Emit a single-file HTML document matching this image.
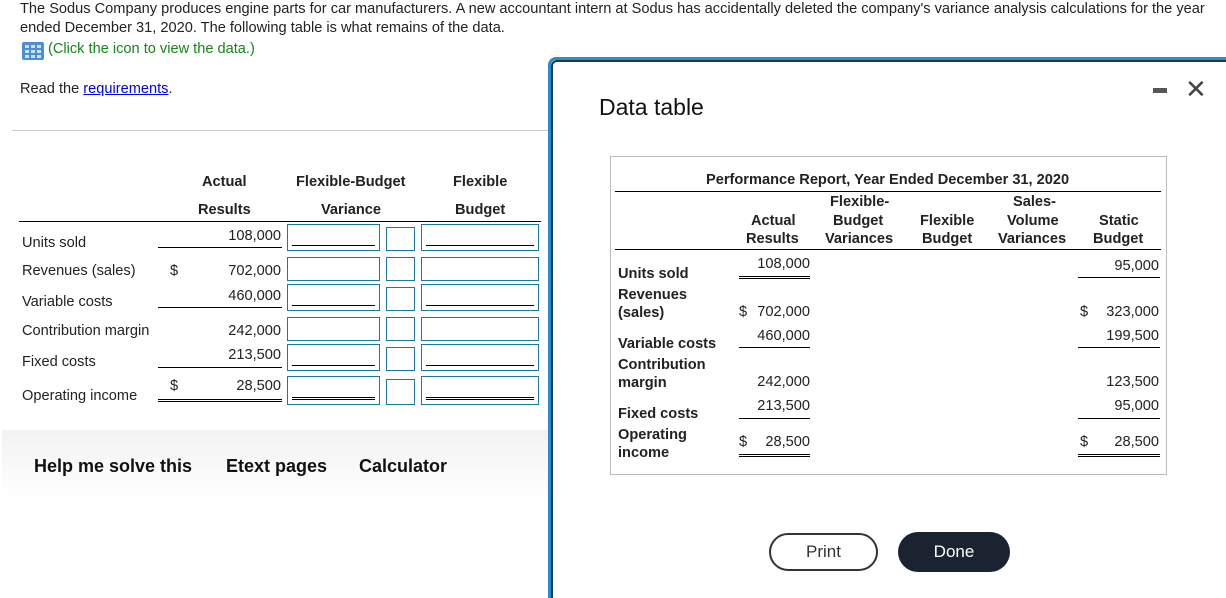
<!DOCTYPE html><html style="overflow:hidden"><head><style>
html,body{overflow:hidden;height:598px}
body{margin:0;width:1226px;background:#fff;font-family:"Liberation Sans",Arial,sans-serif;color:#222;position:relative}
.a{position:absolute;white-space:nowrap}
.t{font-size:14.6px}
.b{font-weight:bold}
.r{text-align:right}
.in{position:absolute;border:1px solid #1a7a9b;background:#fff;box-sizing:border-box}
.ul{position:absolute;border-top:1px solid #000}
.dl{position:absolute;border-top:3px double #000;height:0}
</style></head><body>
<div class="a t" style="left:20px;top:0px;line-height:19px;color:#222">The Sodus Company produces engine parts for car manufacturers. A new accountant intern at Sodus has accidentally deleted the company's variance analysis calculations for the year<br>ended December 31, 2020. The following table is what remains of the data.</div>
<svg class="a" style="left:22px;top:42px" width="22" height="18"><rect x="0" y="0" width="22" height="18" rx="2" fill="#4a8fd8"/><g fill="#cfe3f7"><rect x="3" y="3" width="4" height="3"/><rect x="9" y="3" width="4" height="3"/><rect x="15" y="3" width="4" height="3"/><rect x="3" y="8" width="4" height="3"/><rect x="9" y="8" width="4" height="3"/><rect x="15" y="8" width="4" height="3"/><rect x="3" y="13" width="4" height="3"/><rect x="9" y="13" width="4" height="3"/><rect x="15" y="13" width="4" height="3"/></g></svg>
<div class="a t" style="left:48px;top:41px;color:#118811">(Click the icon to view the data.)</div>
<div class="a t" style="left:20px;top:81px">Read the <span style="color:#00e;text-decoration:underline">requirements</span>.</div>
<div class="a" style="left:12px;top:130px;width:540px;border-top:1px solid #ccc"></div>

<div class="a t b" style="left:202px;top:174px">Actual</div>
<div class="a t b" style="left:296px;top:174px">Flexible-Budget</div>
<div class="a t b" style="left:453px;top:174px">Flexible</div>
<div class="a t b" style="left:198px;top:202px">Results</div>
<div class="a t b" style="left:321px;top:202px">Variance</div>
<div class="a t b" style="left:455px;top:202px">Budget</div>
<div class="ul" style="left:19px;top:221px;width:522px"></div>

<div class="a t" style="left:22px;top:235px">Units sold</div>
<div class="a t" style="left:22px;top:263px">Revenues (sales)</div>
<div class="a t" style="left:22px;top:294px">Variable costs</div>
<div class="a t" style="left:22px;top:323px">Contribution margin</div>
<div class="a t" style="left:22px;top:354px">Fixed costs</div>
<div class="a t" style="left:22px;top:388px">Operating income</div>
<div class="a t" style="left:170px;top:263px">$</div>
<div class="a t" style="left:170px;top:378px">$</div>
<div class="a t r" style="left:200px;width:81px;top:228px">108,000</div>
<div class="a t r" style="left:200px;width:81px;top:263px">702,000</div>
<div class="a t r" style="left:200px;width:81px;top:288px">460,000</div>
<div class="a t r" style="left:200px;width:81px;top:323px">242,000</div>
<div class="a t r" style="left:200px;width:81px;top:347px">213,500</div>
<div class="a t r" style="left:200px;width:81px;top:378px">28,500</div>
<div class="ul" style="left:158px;top:247px;width:124px"></div>
<div class="ul" style="left:158px;top:307px;width:124px"></div>
<div class="ul" style="left:158px;top:367px;width:124px"></div>
<div class="dl" style="left:158px;top:399px;width:124px"></div>

<div class="in" style="left:287px;top:224px;width:93px;height:27px"></div><div class="in" style="left:386px;top:227px;width:29px;height:24px"></div><div class="in" style="left:421px;top:224px;width:118px;height:27px"></div>
<div class="in" style="left:287px;top:257px;width:93px;height:24px"></div><div class="in" style="left:386px;top:257px;width:29px;height:24px"></div><div class="in" style="left:421px;top:257px;width:118px;height:24px"></div>
<div class="in" style="left:287px;top:284px;width:93px;height:27px"></div><div class="in" style="left:386px;top:287px;width:29px;height:24px"></div><div class="in" style="left:421px;top:284px;width:118px;height:27px"></div>
<div class="in" style="left:287px;top:317px;width:93px;height:24px"></div><div class="in" style="left:386px;top:317px;width:29px;height:24px"></div><div class="in" style="left:421px;top:317px;width:118px;height:24px"></div>
<div class="in" style="left:287px;top:344px;width:93px;height:27px"></div><div class="in" style="left:386px;top:347px;width:29px;height:24px"></div><div class="in" style="left:421px;top:344px;width:118px;height:27px"></div>
<div class="in" style="left:287px;top:376px;width:93px;height:29px"></div><div class="in" style="left:386px;top:379px;width:29px;height:26px"></div><div class="in" style="left:421px;top:376px;width:118px;height:29px"></div>
<div class="ul" style="left:292px;top:245px;width:83px"></div><div class="ul" style="left:426px;top:245px;width:108px"></div>
<div class="ul" style="left:292px;top:305px;width:83px"></div><div class="ul" style="left:426px;top:305px;width:108px"></div>
<div class="ul" style="left:292px;top:365px;width:83px"></div><div class="ul" style="left:426px;top:365px;width:108px"></div>
<div class="dl" style="left:292px;top:397px;width:83px"></div><div class="dl" style="left:426px;top:397px;width:108px"></div>

<div class="a" style="left:2px;top:430px;width:550px;height:70px;background:linear-gradient(#f2f2f2,#fff)"></div>
<div class="a b" style="left:34px;top:456px;font-size:18px;color:#111">Help me solve this</div>
<div class="a b" style="left:226px;top:456px;font-size:18px;color:#111">Etext pages</div>
<div class="a b" style="left:359px;top:456px;font-size:18px;color:#111">Calculator</div>

<div class="a" style="left:548px;top:57px;width:690px;height:560px;border:3px solid #1f8fd6;border-radius:8px;box-sizing:border-box"></div>
<div class="a" style="left:551px;top:60px;width:690px;height:560px;border:2px solid #333;border-radius:6px;box-sizing:border-box;background:#fff"></div>
<div class="a" style="left:599px;top:94px;font-size:23px;color:#111">Data table</div>
<div class="a" style="left:1153px;top:88px;width:14px;height:5px;background:#555"></div>
<div class="a" style="left:1185px;top:74px;font-size:26px;color:#444">✕</div>

<div class="a" style="left:610px;top:156px;width:557px;height:319px;border:1px solid #bbb;box-sizing:border-box"></div>
<div class="a t b" style="left:706px;top:172px;color:#222">Performance Report, Year Ended December 31, 2020</div>
<div class="ul" style="left:615px;top:191px;width:546px"></div>
<div class="a t b" style="left:830px;top:194px">Flexible-</div>
<div class="a t b" style="left:1013px;top:194px">Sales-</div>
<div class="a t b" style="left:751px;top:213px">Actual</div>
<div class="a t b" style="left:833px;top:213px">Budget</div>
<div class="a t b" style="left:920px;top:213px">Flexible</div>
<div class="a t b" style="left:1007px;top:213px">Volume</div>
<div class="a t b" style="left:1099px;top:213px">Static</div>
<div class="a t b" style="left:746px;top:231px">Results</div>
<div class="a t b" style="left:825px;top:231px">Variances</div>
<div class="a t b" style="left:922px;top:231px">Budget</div>
<div class="a t b" style="left:998px;top:231px">Variances</div>
<div class="a t b" style="left:1093px;top:231px">Budget</div>
<div class="ul" style="left:615px;top:249px;width:546px"></div>

<div class="a t b" style="left:618px;top:266px">Units sold</div>
<div class="a t b" style="left:618px;top:286px;line-height:18px">Revenues<br>(sales)</div>
<div class="a t b" style="left:618px;top:336px">Variable costs</div>
<div class="a t b" style="left:618px;top:356px;line-height:18px">Contribution<br>margin</div>
<div class="a t b" style="left:618px;top:406px">Fixed costs</div>
<div class="a t b" style="left:618px;top:426px;line-height:18px">Operating<br>income</div>

<div class="a t r" style="left:730px;width:80px;top:256px">108,000</div>
<div class="a t" style="left:739px;top:304px">$</div><div class="a t r" style="left:730px;width:80px;top:304px">702,000</div>
<div class="a t r" style="left:730px;width:80px;top:328px">460,000</div>
<div class="a t r" style="left:730px;width:80px;top:374px">242,000</div>
<div class="a t r" style="left:730px;width:80px;top:398px">213,500</div>
<div class="a t" style="left:739px;top:434px">$</div><div class="a t r" style="left:730px;width:80px;top:434px">28,500</div>
<div class="dl" style="left:739px;top:276px;width:71px"></div>
<div class="ul" style="left:739px;top:347px;width:71px"></div>
<div class="ul" style="left:739px;top:418px;width:71px"></div>
<div class="dl" style="left:739px;top:454px;width:71px"></div>

<div class="a t r" style="left:1060px;width:99px;top:258px">95,000</div>
<div class="a t" style="left:1080px;top:304px">$</div><div class="a t r" style="left:1060px;width:99px;top:304px">323,000</div>
<div class="a t r" style="left:1060px;width:99px;top:328px">199,500</div>
<div class="a t r" style="left:1060px;width:99px;top:374px">123,500</div>
<div class="a t r" style="left:1060px;width:99px;top:398px">95,000</div>
<div class="a t" style="left:1080px;top:434px">$</div><div class="a t r" style="left:1060px;width:99px;top:434px">28,500</div>
<div class="ul" style="left:1078px;top:277px;width:82px"></div>
<div class="ul" style="left:1078px;top:347px;width:82px"></div>
<div class="ul" style="left:1078px;top:418px;width:82px"></div>
<div class="dl" style="left:1078px;top:454px;width:82px"></div>

<div class="a" style="left:769px;top:533px;width:109px;height:38px;border:2px solid #333;border-radius:20px;box-sizing:border-box;text-align:center;line-height:34px;font-size:17px;color:#333">Print</div>
<div class="a" style="left:898px;top:532px;width:112px;height:40px;background:#1c2330;border-radius:20px;text-align:center;line-height:40px;font-size:17px;color:#fff">Done</div>
</body></html>
